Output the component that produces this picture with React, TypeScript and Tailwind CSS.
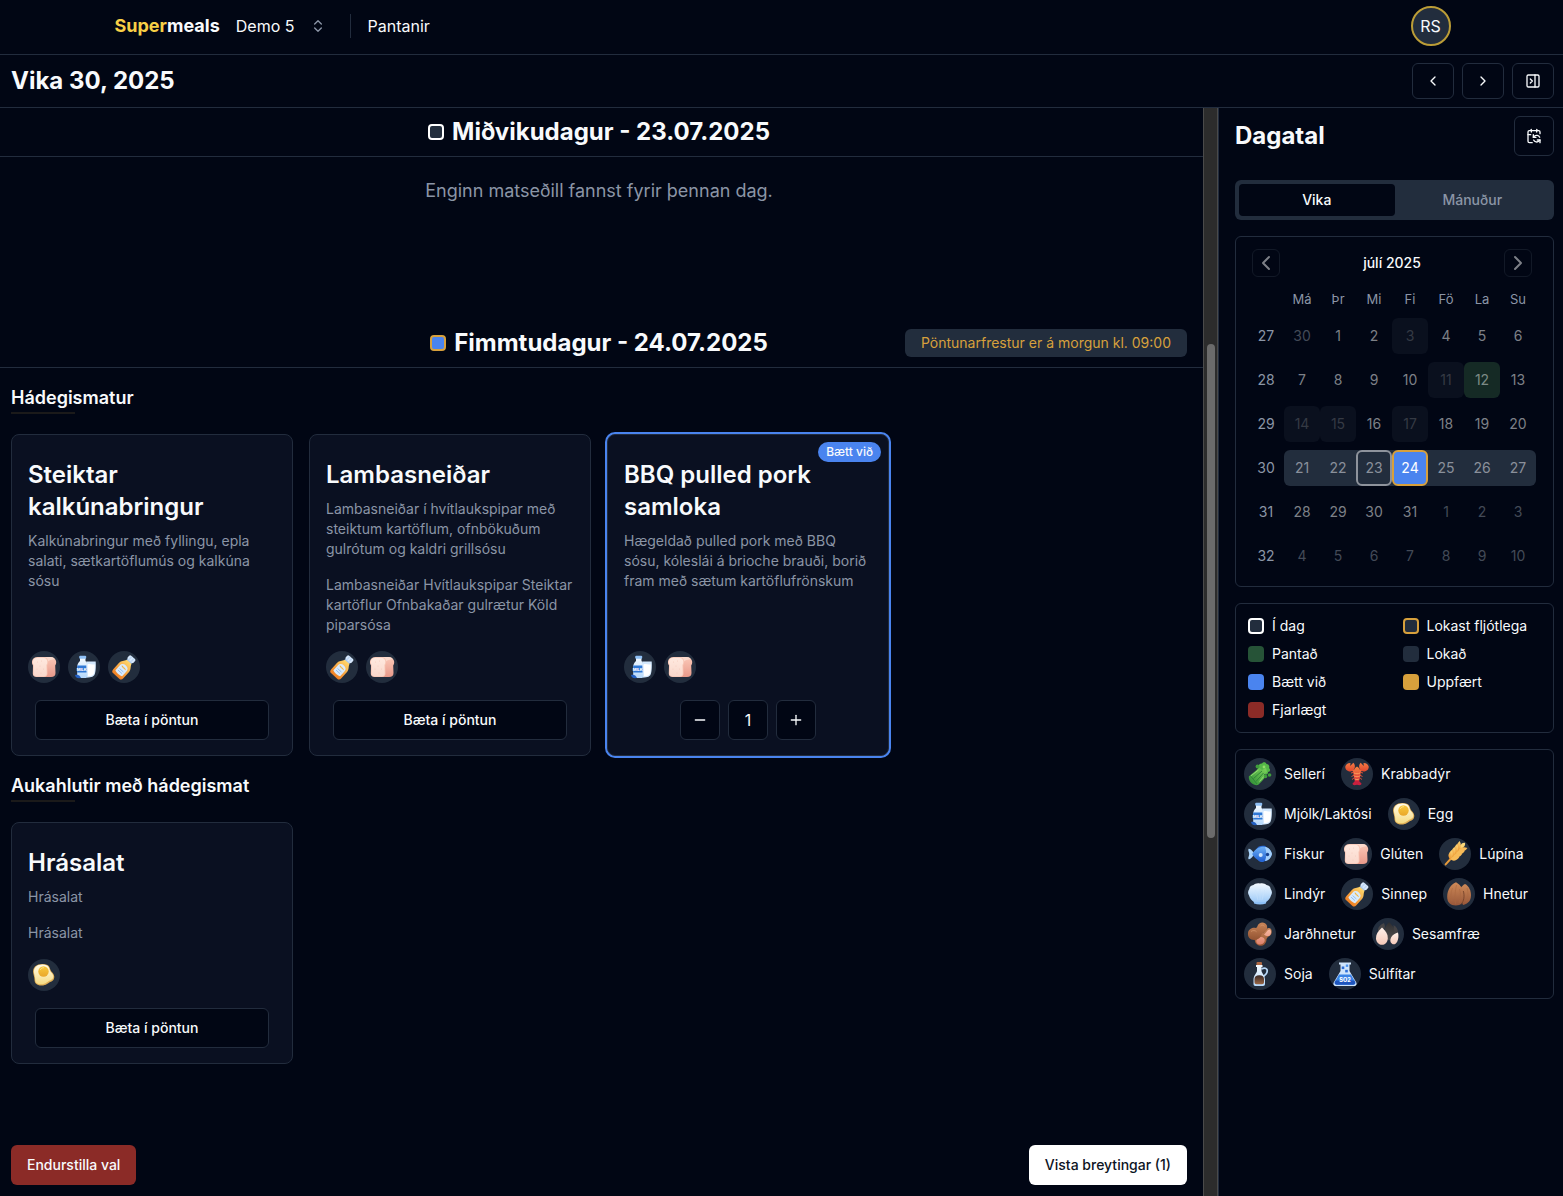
import type { ReactNode } from "react";
import {
  CalendarSync,
  ChevronLeft,
  ChevronRight,
  ChevronsUpDown,
  Minus,
  PanelRightClose,
  Plus,
} from "lucide-react";
import clsx from "clsx";

/* Gradients shared by the allergen drawings */
function Gradients() {
  const list: [string, string, string, string][] = [
    ["g-green", "#7fd65c", "#2c8a35", "d"],
    ["g-lobster", "#f5853f", "#d92f3c", "v"],
    ["g-claw", "#f47b43", "#e0472f", "v"],
    ["g-blue", "#6fb2f7", "#1f5fd0", "v"],
    ["g-glass", "#f4faff", "#b5d8fb", "v"],
    ["g-egg", "#fffbea", "#f6dc84", "v"],
    ["g-yolk", "#f9c93c", "#e9a72b", "v"],
    ["g-crumb", "#ffe9df", "#f9d8cc", "v"],
    ["g-crust", "#fbc9b8", "#e8998a", "v"],
    ["g-wheat", "#fbd779", "#ef9a35", "v"],
    ["g-shell", "#f3f9ff", "#9fcbf8", "v"],
    ["g-sauce", "#ffd66b", "#ef7f23", "v"],
    ["g-nut", "#cf8a58", "#97573a", "v"],
    ["g-peanut", "#c98558", "#935332", "v"],
    ["g-pink", "#f7b9a3", "#dd8069", "v"],
    ["g-seed", "#fff1ea", "#f6c9b8", "v"],
    ["g-dark", "#2e2e30", "#504e4e", "v"],
    ["g-soy", "#3b2a26", "#9a6746", "v"],
  ];
  return (
    <svg className="absolute size-0" aria-hidden="true">
      <defs>
        {list.map(([id, a, b, dir]) => (
          <linearGradient key={id} id={id} x1={dir === "d" ? "1" : "0"} y1="0" x2="0" y2="1">
            <stop offset="0" stopColor={a} />
            <stop offset="1" stopColor={b} />
          </linearGradient>
        ))}
      </defs>
    </svg>
  );
}

const drawings: Record<string, ReactNode> = {
  celery: (
    <>
      <path d="M11 5c-1-2 1-4 3-3.500c1-1.800 4-1.500 4.500.500c2 0 3.500 2 2.500 4c2 1.500 1 4-1 4c.5 2-1.500 3-3 2.500L12 10z" fill="#55b848" />
      <path d="M.800 14.500C4 11.500 8 9 11 5.500l3 2.500l4-2l1 4l-3 2.500l2 1.500c-3 4-5 6.500-8 9C6 24 .300 20 .800 14.500z" fill="url(#g-green)" />
      <path d="M3 14.500l6 7.500M5.500 16.500L14 9M8 19.500l7.500-8.500" stroke="#2b8237" strokeWidth=".9" fill="none" />
      <path d="M3 13.800L10.500 8M11.500 19.500l5-6" stroke="#a2e57c" strokeWidth=".8" />
      <circle cx="21.500" cy="13" r="1.800" fill="#3f9e3c" />
      <circle cx="17.500" cy="14.500" r="1.800" fill="#3f9e3c" />
      <circle cx="9.500" cy="4.500" r="1.900" fill="#3f9e3c" />
      <circle cx="16" cy="5" r="1.400" fill="#93dd6a" />
    </>
  ),
  lobster: (
    <>
      <path d="M10 10L6 11M14 10l4 1M9.500 13l-3 1.500M14.500 13l3 1.500M9.500 15.500l-2.500 2M14.500 15.500l2.500 2" stroke="#d9503a" strokeWidth="1" />
      <path d="M7 7.500l3.500 3M17 7.500l-3.500 3" stroke="#ef6a3e" strokeWidth="2" />
      <path d="M5.500 9.500C2 9.500 0 7 .300 4.500C.700 2.500 3 .800 5.500 1L5.200 4L8.300.800C11 3 10.500 8.500 5.500 9.500z" fill="url(#g-claw)" />
      <path d="M18.500 9.500c3.500 0 5.500-2.500 5.200-5C23.300 2.500 21 .800 18.500 1l.3 3L15.700.800C13 3 13.500 8.500 18.500 9.500z" fill="url(#g-claw)" />
      <path d="M12 4.500c3 1.500 4 5 3.500 8.500L14 20h-4l-1.500-7C8 9.500 9 6 12 4.500z" fill="url(#g-lobster)" />
      <path d="M9 11c2 1 4 1 6 0M9.200 14c2 1 3.600 1 5.600 0M9.800 17c1.500.700 2.900.700 4.400 0" stroke="#ffa45c" strokeWidth=".9" fill="none" />
      <path d="M10 19h4l2.500 2.500c0 2-2.500 2-4.500 1.200c-2 .8-4.500.8-4.500-1.200z" fill="#c9203f" />
    </>
  ),
  milk: (
    <>
      <path d="M8 2.500h5.500V6c1.700 1.800 2.300 3.500 2.300 6v9c0 1-.8 2-2 2H7.200c-1.200 0-2-1-2-2v-9c0-2.500 1-4.200 2.800-6z" fill="url(#g-glass)" />
      <rect x="7.200" y=".8" width="7" height="3" rx="1" fill="#8fc0f5" />
      <rect x="5.200" y="10.500" width="9.500" height="7" fill="#2f78d6" />
      <text x="9.700" y="15.700" fontSize="4" fontWeight="800" fill="#fff" textAnchor="middle" fontFamily="Inter, sans-serif">MILK</text>
      <path d="M14.200 6.500h9.500c.3 5 .1 9-.7 12c-.8 3-3.300 4-8 4z" fill="#d3e8fd" />
      <path d="M15.500 9.500c2.500-1.300 4.500.800 7.200-.2c.2 4 0 7-.6 9c-.7 2.300-2.600 3-6.100 3z" fill="#fff" />
      <path d="M3 20c2.200-1 5 0 6 3c-3 .500-5.500 0-6-3z" fill="#2260c4" />
    </>
  ),
  egg: (
    <>
      <path d="M3 3.500C6 .500 12 .300 15.500 2c3 1.700 2 5 4.800 7.500c3 3 2.500 7.500-.8 9c-4 1.500-4.700 4-10 4c-5 0-7-2.500-7-6C2.500 12-1 8 3 3.500z" fill="#dfae55" />
      <path d="M3.600 4C6.500 1.200 11.700 1 15 2.500c2.800 1.500 2 4.800 4.500 7.300c2.800 2.800 2.300 6.200-.8 7.400c-4 1.500-4.700 4-9.500 4c-4.500 0-6-2-6-5.300C3.200 12 0 8 3.600 4z" fill="url(#g-egg)" />
      <circle cx="11.500" cy="8.500" r="5.200" fill="url(#g-yolk)" />
      <path d="M8.500 6.500c.7-1.300 1.800-1.800 3-1.800" stroke="#ffe48a" strokeWidth="1" strokeLinecap="round" fill="none" />
    </>
  ),
  fish: (
    <>
      <path d="M6.500 12C5 9.500 2 6 .500 7c-.8 1 .7 3 .7 5s-1.500 4-.7 5c1.500 1 4.500-2.500 6-5z" fill="#a9d3fb" />
      <path d="M8 8c1-3.500 5-5 9.500-4L19 7zM9 16c1 3.500 4 5 7 3.500l1-3z" fill="#2b6bd6" />
      <path d="M4.200 12c2.800-5 6.800-7.300 11.300-7.300c4.200 0 7.500 3 8.500 7.300c-1 4.300-4.300 7.300-8.500 7.300c-4.500 0-8.500-2.300-11.300-7.300z" fill="url(#g-blue)" />
      <path d="M17 5c4 .500 6.200 3.500 7 7c-.8 3.500-3 6.500-7 7c1.800-4.500 1.800-9.500 0-14z" fill="#a5d0fb" />
      <circle cx="19.500" cy="12.500" r="1.700" fill="#14408f" />
      <circle cx="12.700" cy="13" r="2" fill="#cfe6fd" />
    </>
  ),
  bread: (
    <>
      <path d="M6 2h12.500C24 2 25.500 7.500 23.200 10.500L23.500 18c0 2.800-1.500 4-4.500 4H6z" fill="url(#g-crust)" />
      <path d="M11 2h7.500c2 0 3.500 .8 4.300 2.200C20 4.500 17 5 15.300 7z" fill="#fbdacd" />
      <path d="M5.500 2h5.800c5 0 6 5 3.900 8.300l.3 8.200c0 2.300-1.300 3.500-3.500 3.500H4.500C2 22 .800 20.800.800 18.500l.2-8C-1 7.500-.300 2 5.500 2z" fill="#f8c7b6" />
      <path d="M5.700 2.700h5.400c4.200 0 5.200 4.400 3.300 7.400l.3 8.200c0 1.900-1 3-2.900 3H4.700c-2 0-3.100-1-3.100-3l.2-8C0 7.300.500 2.700 5.700 2.700z" fill="url(#g-crumb)" />
      <g fill="#f0b9a6">
        <circle cx="5.500" cy="7" r=".4" />
        <circle cx="9.500" cy="6" r=".4" />
        <circle cx="8" cy="11" r=".4" />
        <circle cx="5" cy="14" r=".4" />
        <circle cx="11.500" cy="14" r=".4" />
        <circle cx="9" cy="18" r=".4" />
      </g>
    </>
  ),
  wheat: (
    <g transform="rotate(42 12 12)">
      <path d="M12 14v12" stroke="#e79a3a" strokeWidth="2" strokeLinecap="round" />
      <rect x="9.500" y="1" width="5" height="17" rx="2.500" fill="#eda43f" />
      <path d="M12-3c2.500 2 2.500 4.500 0 7c-2.500-2.500-2.500-5 0-7z" fill="#fbd779" />
      {[-0.5, 3.5, 7.5, 11.5].map((y) => (
        <g key={y} transform={`translate(0 ${y})`}>
          <path d="M11.900 7.500C8 7.500 6.300 4.500 6.800-.300C10.500 1 12.300 3.500 11.900 7.500z" fill="url(#g-wheat)" />
          <path d="M12.100 7.500C16 7.500 17.700 4.500 17.200-.300C13.500 1 11.700 3.500 12.100 7.500z" fill="#f7bb58" />
        </g>
      ))}
    </g>
  ),
  shell: (
    <>
      <path d="M5.500 17h13l-.5 4.500c-3.500 1.300-8.500 1.300-12 0z" fill="#8fc1f7" />
      <path d="M12 1.500c3-.6 5 .2 6.500 1.500c2.500.300 4 1.800 4.200 4c1.600 2 1.600 4.500.3 6.500c-.8 3-2.500 5-5 6.500H6c-2.500-1.500-4.200-3.500-5-6.500c-1.300-2-1.300-4.500.3-6.500c.2-2.200 1.700-3.700 4.200-4C7 1.700 9 .900 12 1.500z" fill="url(#g-shell)" />
      <path d="M12 7v11M7.500 8l2.500 10M16.500 8L14 18" stroke="#cbe3fb" strokeWidth=".5" />
    </>
  ),
  sauce: (
    <g transform="translate(-.500 1) rotate(42 12 12) scale(.94)">
      <path d="M9.500 2h6.500v3H9.500z" fill="#a8c8ee" />
      <rect x="8.500" y="-2.500" width="8.500" height="5.300" rx="1.600" fill="#d6e7fb" />
      <path d="M11.200-2v4.500M14.200-2v4.500" stroke="#9dc0ec" strokeWidth=".7" />
      <path d="M9.300 4h7c.8 3 3.700 4.300 3.700 8v9c0 2.200-1 3.300-3 3.300H8.500c-2 0-3-1.100-3-3.300v-9c0-3.700 3-5 3.800-8z" fill="url(#g-sauce)" />
      <path d="M8 13.500c0-3 2-4.500 4.800-4.500s4.800 1.500 4.800 4.500v6.800c-1.500 1.200-8.100 1.200-9.600 0z" fill="#d9ebfd" />
      <path d="M10 12.500c1-1.200 2 .8 3 0s1.800.8 2.600 0" stroke="#f3b540" strokeWidth="1.200" fill="none" />
      <path d="M10 16h5.500M10 18.300h5.500" stroke="#8bbaf0" strokeWidth=".9" />
    </g>
  ),
  nuts: (
    <>
      <path d="M18 2c4 2 6 6.500 6 11.500c0 5-3 8.500-8 9.500L12 14c0-6 2-10 6-12z" fill="url(#g-nut)" />
      <path d="M9 .300C14 3 17.500 9 17 15c-.3 5.500-3 8.500-8.200 8.500S0 20.500.200 14.500C.500 8 3.500 2.500 9 .300z" fill="url(#g-nut)" />
      <path d="M9.500 3c-1.500 6-2 13-1 19M5.500 6c-2 5-2 9-.5 13M12.500 7c1.500 5 1.200 9.500-.5 14" stroke="#a9683f" strokeWidth=".6" fill="none" />
      <path d="M16.300 9c1.500 5 .7 10-2.300 13.500" stroke="#75432a" strokeWidth=".9" fill="none" />
      <path d="M20 6c1.500 4.500 1.300 9-.5 13" stroke="#a9683f" strokeWidth=".6" fill="none" />
    </>
  ),
  peanut: (
    <>
      <path d="M14 11c3-.5 4-4.500 6.500-5c3-.300 4 3.500 2.500 6.500c-1.500 2-3.500 2-4.500 4.500c0 4-2.500 7-6 6.800S6 20 7 16.500z" fill="url(#g-peanut)" />
      <path d="M16 12.500c2-1 3.500-5.500 5.700-5c1.800.8 1.800 4 .3 5.700c-1.500 1.500-4 1-6-.7zM8.500 18c1.500-3 5-4 7.300-2c2 2 .7 5.500-2.500 6.300S7.500 21 8.500 18z" fill="url(#g-pink)" />
      <path d="M9.500 4C10.500 1 14-.300 17 1.200c2.500 1.500 3 5 1 7.500c-1.500 1.800-3.300 1.500-4.500 4c-1 3-4 5.500-7.500 5.200c-4 0-6.500-3-6-7S4.500 5.500 6.500 5.800S9 5.500 9.500 4z" fill="url(#g-peanut)" />
      <path d="M3 9.500c2-1.300 4-1.300 5.500.2M12.500 4c1.500-1.300 3-1 4 .3" stroke="#dda076" strokeWidth=".6" fill="none" />
    </>
  ),
  sesame: (
    <>
      <path d="M8 1c1.500 3 1 5.500-1 7.500c-2 1.500-4.500 1.500-5 .5C1.500 6 4 2.500 8 1z" fill="#454446" />
      <path d="M13 .300c4 3.500 6.500 7 6 11.200c-.5 4-3.500 7.500-6.500 6.500s-4.500-4.500-4-9.500C9 5.500 10.500 2.500 13 .300z" fill="url(#g-dark)" />
      <path d="M17.500 3c3 1.500 4.500 4.500 4.500 7.500l-3.500 2z" fill="#444244" />
      <path d="M6 5.500c4 3.500 6 7 5.800 11c-.3 4-2.800 6.300-5.800 6.300S.300 20.500 0 16.500C-.200 12.500 2 9 6 5.500z" fill="url(#g-seed)" />
      <path d="M22 10.500c.8 3 .5 6.500-.8 9.300c-1.400 2.500-3.500 3.200-5.200 2c-2-1.300-2.200-4-.8-6.500c1.500-2.500 4-4 6.800-4.800z" fill="url(#g-seed)" />
    </>
  ),
  soy: (
    <>
      <path d="M13.500 7c4-2 6.500 0 5.500 3.200c-.7 2.300-2.500 2.800-3.500 4.300" stroke="#b9d9f8" strokeWidth="1.700" fill="none" />
      <rect x="8.500" y="0" width="5.500" height="3.500" rx="1" fill="#b06a45" />
      <path d="M8 3h6.500v2h-1v4c.5 2.500 3.500 4.500 3.500 9v4c0 1-.7 2-2 2H7.500c-1.300 0-2-1-2-2v-4c0-4.500 3-6.500 3.500-9V5H8z" fill="url(#g-glass)" />
      <path d="M6.500 17c0-2 1.500-3.700 4.800-3.700s4.700 1.700 4.700 3.700v3c0 1.500-.8 2.200-2 2.200H8.500c-1.200 0-2-.7-2-2.200z" fill="url(#g-soy)" />
    </>
  ),
  flask: (
    <>
      <path d="M6 .500h12v2h-1.500V9l6.500 11c1.300 2.200.3 4-2 4H3c-2.300 0-3.300-1.800-2-4L7.500 9V2.500H6z" fill="#cfe5fd" />
      <path d="M6 12.500h12l4 7.300c1 2-.2 3-2 3H4c-1.800 0-3-1-2-3z" fill="#3b84e6" />
      <path d="M2.500 18.500h19l.7 1.800c.4 1.500-.6 2.500-2 2.500H3.800c-1.400 0-2.400-1-2-2.500z" fill="#1f55bd" />
      <rect x="8.700" y="4.500" width="2.600" height="2.600" fill="#2f6fd8" />
      <rect x="12.800" y="2.500" width="2.400" height="2.400" fill="#4d94ee" />
      <rect x="12.200" y="7.800" width="2.600" height="2.600" fill="#2f6fd8" />
      <text x="12" y="19.800" fontSize="5.500" fontWeight="800" fill="#fff" textAnchor="middle" fontFamily="Inter, sans-serif">SO2</text>
    </>
  ),
};

function Allergen({ name }: { name: string }) {
  return (
    <span className="flex size-8 shrink-0 items-center justify-center rounded-full bg-[#222d3d]">
      <svg viewBox="0 0 24 24" className="size-6 overflow-visible" aria-hidden="true">
        {drawings[name]}
      </svg>
    </span>
  );
}

const outline =
  "flex items-center justify-center rounded-md border border-[#222c3d] bg-[#010614]";

function DayHeader({ title, swatch, notice }: { title: string; swatch: string; notice?: string }) {
  return (
    <div className="grid grid-cols-[1fr_auto_1fr] items-center border-b border-[#222c3d] py-2 pr-4 pl-[11px]">
      <span />
      <h2 className="flex items-center gap-2 text-2xl font-bold">
        <span className={clsx("size-4 rounded border-2", swatch)} />
        {title}
      </h2>
      {notice && (
        <p className="justify-self-end rounded-md bg-[#222d3d] px-4 py-1 text-sm text-[#d7a03c]">{notice}</p>
      )}
    </div>
  );
}

type Meal = { title: string; text: string[]; allergens: string[]; count?: number };

function MealCard({ title, text, allergens, count }: Meal) {
  return (
    <article
      className={clsx(
        "relative flex flex-col rounded-lg border border-[#222c3d] bg-[#0a1021] px-4 pt-6 pb-[15px]",
        count && "ring-2 ring-[#4a84ef]",
      )}
    >
      {count && (
        <span className="absolute top-[7px] right-[7px] rounded-full bg-[#4a84ef] px-2 py-0.5 text-xs font-medium">
          Bætt við
        </span>
      )}
      <h4 className="text-2xl font-semibold">{title}</h4>
      <div className="mt-2 mb-4 flex flex-col gap-4 text-sm text-[#8b95a6]">
        {text.map((t, i) => (
          <p key={i}>{t}</p>
        ))}
      </div>
      <div className="mt-auto flex gap-2">
        {allergens.map((a) => (
          <Allergen key={a} name={a} />
        ))}
      </div>
      {count ? (
        <div className="mt-[17px] flex justify-center gap-2">
          <button aria-label="Fækka" className={clsx(outline, "size-10")}>
            <Minus className="size-4" />
          </button>
          <input
            aria-label="Fjöldi"
            defaultValue={count}
            className="size-10 rounded-md border border-[#222c3d] bg-[#010614] text-center text-base"
          />
          <button aria-label="Fjölga" className={clsx(outline, "size-10")}>
            <Plus className="size-4" />
          </button>
        </div>
      ) : (
        <button className={clsx(outline, "mx-[7px] mt-[17px] h-10 text-sm font-medium")}>Bæta í pöntun</button>
      )}
    </article>
  );
}

function MealSection({ title, meals }: { title: string; meals: Meal[] }) {
  return (
    <section className="mt-4 pr-4 pl-[11px]">
      <h3 className="text-lg font-semibold">{title}</h3>
      <div className="mb-5 h-0.5 w-16 bg-[#1b1a1a]" />
      <div className="grid grid-cols-4 gap-4">
        {meals.map((m) => (
          <MealCard key={m.title} {...m} />
        ))}
      </div>
    </section>
  );
}

const lunch: Meal[] = [
  {
    title: "Steiktar kalkúnabringur",
    text: ["Kalkúnabringur með fyllingu, epla salati, sætkartöflumús og kalkúna sósu"],
    allergens: ["bread", "milk", "sauce"],
  },
  {
    title: "Lambasneiðar",
    text: [
      "Lambasneiðar í hvítlaukspipar með steiktum kartöflum, ofnbökuðum gulrótum og kaldri grillsósu",
      "Lambasneiðar Hvítlaukspipar Steiktar kartöflur Ofnbakaðar gulrætur Köld piparsósa",
    ],
    allergens: ["sauce", "bread"],
  },
  {
    title: "BBQ pulled pork samloka",
    text: ["Hægeldað pulled pork með BBQ sósu, kóleslái á brioche brauði, borið fram með sætum kartöflufrönskum"],
    allergens: ["milk", "bread"],
    count: 1,
  },
];

const sides: Meal[] = [{ title: "Hrásalat", text: ["Hrásalat", "Hrásalat"], allergens: ["egg"] }];

type Kind = "out" | "closed" | "ordered" | "week" | "today" | "added" | "open";

const kindClass: Record<Kind, string> = {
  open: "text-[#7d8087]",
  out: "text-[#434a57]",
  closed: "rounded-md bg-[#0a101e] text-[#353a44]",
  ordered: "rounded-md bg-[#152a25] text-[#7d8a86]",
  week: "text-[#8a909b]",
  today: "rounded-md border-2 border-[#8e939c] text-[#8a909b]",
  added: "rounded-md border-2 border-[#d7a03c] bg-[#4a84ef] text-white",
};

const weeks = [
  { no: 27, days: [30, 1, 2, 3, 4, 5, 6] },
  { no: 28, days: [7, 8, 9, 10, 11, 12, 13] },
  { no: 29, days: [14, 15, 16, 17, 18, 19, 20] },
  { no: 30, days: [21, 22, 23, 24, 25, 26, 27] },
  { no: 31, days: [28, 29, 30, 31, 1, 2, 3] },
  { no: 32, days: [4, 5, 6, 7, 8, 9, 10] },
];

function kindOf(week: number, day: number): Kind {
  if ((week === 27 && day === 30) || (week === 31 && day < 4) || week === 32) return "out";
  if ([3, 11, 14, 15, 17].includes(day)) return "closed";
  if (day === 12) return "ordered";
  if (day === 23) return "today";
  if (day === 24) return "added";
  return week === 30 ? "week" : "open";
}

function Calendar() {
  const nav =
    "flex size-7 items-center justify-center rounded-md border border-[#121927] text-[#7d8087]";
  return (
    <section className="mt-4 rounded-md border border-[#222c3d] p-3">
      <div className="w-72">
        <div className="flex items-center justify-between px-1">
          <button aria-label="Fyrri mánuður" className={nav}>
            <ChevronLeft className="size-6 shrink-0" />
          </button>
          <span className="text-sm font-medium">júlí 2025</span>
          <button aria-label="Næsti mánuður" className={nav}>
            <ChevronRight className="size-6 shrink-0" />
          </button>
        </div>
        <table className="mt-3 block text-sm">
          <thead className="block">
            <tr className="flex text-[13px] leading-5 text-[#8b95a6]">
              <td className="w-9" />
              {["Má", "Þr", "Mi", "Fi", "Fö", "La", "Su"].map((d) => (
                <th key={d} scope="col" className="w-9 font-normal">
                  {d}
                </th>
              ))}
            </tr>
          </thead>
          <tbody className="mt-[9px] flex flex-col gap-2">
            {weeks.map((w) => (
              <tr key={w.no} className="flex">
                <th scope="row" className="flex size-9 items-center justify-center font-normal text-[#8b95a6]">
                  {w.no}
                </th>
                {w.days.map((d) => (
                  <td
                    key={d}
                    className={clsx(
                      w.no === 30 && "bg-[#222d3d] first-of-type:rounded-l-md last-of-type:rounded-r-md",
                    )}
                  >
                    <button className={clsx("flex size-9 items-center justify-center", kindClass[kindOf(w.no, d)])}>
                      {d}
                    </button>
                  </td>
                ))}
              </tr>
            ))}
          </tbody>
        </table>
      </div>
    </section>
  );
}

const legend = [
  ["Í dag", "border-2 border-white bg-[#222d3d]"],
  ["Lokast fljótlega", "border-2 border-[#d7a03c] bg-[#222d3d]"],
  ["Pantað", "bg-[#265337]"],
  ["Lokað", "bg-[#222d3d]"],
  ["Bætt við", "bg-[#4a84ef]"],
  ["Uppfært", "bg-[#d7a03c]"],
  ["Fjarlægt", "bg-[#8b2b27]"],
];

const allergens = [
  ["celery", "Sellerí"],
  ["lobster", "Krabbadýr"],
  ["milk", "Mjólk/Laktósi"],
  ["egg", "Egg"],
  ["fish", "Fiskur"],
  ["bread", "Glúten"],
  ["wheat", "Lúpína"],
  ["shell", "Lindýr"],
  ["sauce", "Sinnep"],
  ["nuts", "Hnetur"],
  ["peanut", "Jarðhnetur"],
  ["sesame", "Sesamfræ"],
  ["soy", "Soja"],
  ["flask", "Súlfítar"],
];

function Sidebar() {
  return (
    <aside className="w-[345px] shrink-0 border-l border-[#222c3d] pt-2 pr-[9px] pl-4">
      <div className="flex items-center justify-between">
        <h2 className="text-2xl font-bold">Dagatal</h2>
        <button aria-label="Samstilla dagatal" className={clsx(outline, "size-10")}>
          <CalendarSync className="size-4" />
        </button>
      </div>
      <div role="tablist" className="mt-6 grid h-10 grid-cols-2 rounded-md bg-[#222d3d] p-1 text-sm font-medium">
        <button role="tab" aria-selected="true" className="rounded bg-[#010614]">
          Vika
        </button>
        <button role="tab" aria-selected="false" className="text-[#8b95a6]">
          Mánuður
        </button>
      </div>
      <Calendar />
      <ul className="mt-4 grid grid-cols-2 gap-x-4 gap-y-2 rounded-md border border-[#222c3d] p-3 text-sm">
        {legend.map(([label, cls]) => (
          <li key={label} className="flex items-center gap-2">
            <span className={clsx("size-4 rounded", cls)} />
            {label}
          </li>
        ))}
      </ul>
      <ul className="mt-4 flex flex-wrap gap-x-4 gap-y-2 rounded-md border border-[#222c3d] p-2 text-sm">
        {allergens.map(([icon, label]) => (
          <li key={icon} className="flex items-center gap-2">
            <Allergen name={icon} />
            {label}
          </li>
        ))}
      </ul>
    </aside>
  );
}

export default function App() {
  return (
    <div className="flex min-h-screen flex-col bg-[#010614] font-['Inter',sans-serif] text-[#f8fafc]">
      <Gradients />
      <header className="border-b border-[#222c3d]">
        <div className="mx-auto flex h-[54px] max-w-[1338px] items-center pb-0.5">
          <a href="#" className="pl-0.5 text-lg font-bold">
            <span className="text-[#f7cf46]">Super</span>meals
          </a>
          <button className="ml-4 flex items-center gap-4">
            Demo 5
            <ChevronsUpDown className="size-4 text-[#8b95a6]" />
          </button>
          <span className="ml-6 h-6 w-px bg-[#222c3d]" />
          <a href="#" className="ml-4">
            Pantanir
          </a>
          <button className="ml-auto size-10 rounded-full border-2 border-[#bb9d37] bg-[#222d3d]">RS</button>
        </div>
      </header>
      <div className="flex items-center gap-2 border-b border-[#222c3d] py-2 pr-[9px] pl-[11px]">
        <h1 className="mr-auto text-2xl font-bold">Vika 30, 2025</h1>
        <button aria-label="Fyrri vika" className={clsx(outline, "h-9 w-[42px]")}>
          <ChevronLeft className="size-4" />
        </button>
        <button aria-label="Næsta vika" className={clsx(outline, "h-9 w-[42px]")}>
          <ChevronRight className="size-4" />
        </button>
        <button aria-label="Fela hliðarstiku" className={clsx(outline, "h-9 w-[42px]")}>
          <PanelRightClose className="size-4" />
        </button>
      </div>
      <div className="flex grow">
        <main className="flex min-w-0 grow flex-col">
          <DayHeader title="Miðvikudagur - 23.07.2025" swatch="border-white bg-[#222d3d]" />
          <p className="min-h-[162px] pt-5 pr-4 pl-[11px] text-center text-lg text-[#8b95a6]">
            Enginn matseðill fannst fyrir þennan dag.
          </p>
          <DayHeader
            title="Fimmtudagur - 24.07.2025"
            swatch="border-[#d7a03c] bg-[#4a84ef]"
            notice="Pöntunarfrestur er á morgun kl. 09:00"
          />
          <MealSection title="Hádegismatur" meals={lunch} />
          <MealSection title="Aukahlutir með hádegismat" meals={sides} />
          <div className="mt-auto flex justify-between pt-4 pr-4 pb-[11px] pl-[11px] text-sm font-medium">
            <button className="h-10 rounded-md bg-[#8b2b27] px-4">Endurstilla val</button>
            <button className="h-10 rounded-md bg-white px-4 text-[#0d1424]">Vista breytingar (1)</button>
          </div>
        </main>
        <div className="flex w-[15px] shrink-0 flex-col items-center border-x border-[#4a4a4a] bg-[#2c2c2c]" aria-hidden="true">
          <div className="grow-[236]" />
          <div className="w-2 grow-[494] rounded-full bg-[#6b6b6b]" />
          <div className="grow-[358]" />
        </div>
        <Sidebar />
      </div>
    </div>
  );
}
